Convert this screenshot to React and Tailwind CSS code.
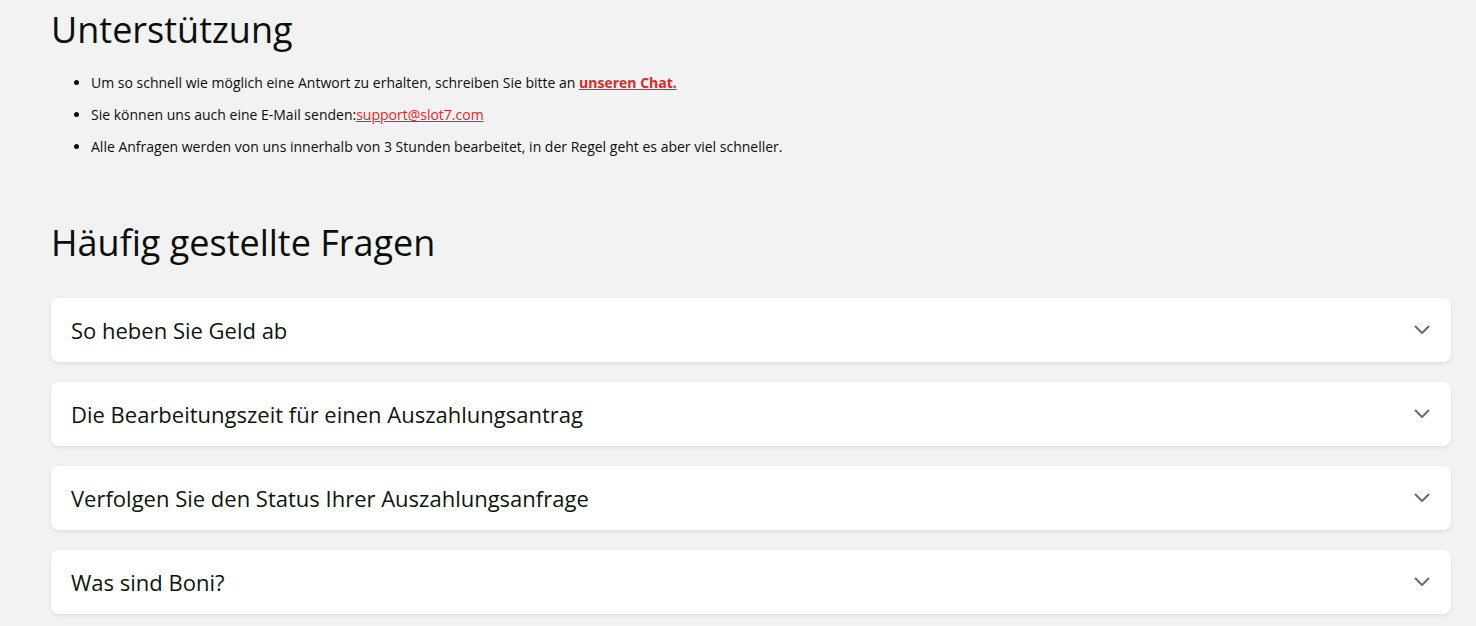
import React from "react";

const faqs = [
  "So heben Sie Geld ab",
  "Die Bearbeitungszeit für einen Auszahlungsantrag",
  "Verfolgen Sie den Status Ihrer Auszahlungsanfrage",
  "Was sind Boni?",
];

function Chevron() {
  return (
    <svg width="16" height="10" viewBox="0 0 16 10" fill="none">
      <path d="M1.5 1.5L8 8L14.5 1.5" stroke="#6b6b6b" strokeWidth="2" strokeLinecap="round" strokeLinejoin="round" />
    </svg>
  );
}

export default function App() {
  return (
    <div className="min-h-[626px] bg-[#f2f2f2] text-[#0b0f0b]" style={{ fontFamily: '"Open Sans", "Noto Sans", sans-serif' }}>
      <div className="pl-[51px] pr-[25px]">
        <h1 className="text-[36px] leading-[48px] pt-[6px] font-normal">Unterstützung</h1>
        <ul className="mt-[20px] list-disc pl-[40px] text-[14px] leading-[18px] flex flex-col gap-[14px]">
          <li>
            Um so schnell wie möglich eine Antwort zu erhalten, schreiben Sie bitte an{" "}
            <a className="text-[#e3261f] font-bold underline">unseren Chat.</a>
          </li>
          <li>
            Sie können uns auch eine E-Mail senden:
            <a className="text-[#e3261f] underline">support@slot7.com</a>
          </li>
          <li>Alle Anfragen werden von uns innerhalb von 3 Stunden bearbeitet, in der Regel geht es aber viel schneller.</li>
        </ul>
        <h2 className="mt-[63px] text-[36px] leading-[48px] font-normal">Häufig gestellte Fragen</h2>
        <div className="mt-[31px] flex flex-col gap-[20px]">
          {faqs.map((q) => (
            <div key={q} className="h-[64px] bg-white rounded-[8px] shadow-[0_2px_4px_rgba(0,0,0,0.08)] flex items-center justify-between pl-[20px] pr-[21px]">
              <span className="text-[22px] text-[#0b170b]">{q}</span>
              <Chevron />
            </div>
          ))}
        </div>
      </div>
    </div>
  );
}
